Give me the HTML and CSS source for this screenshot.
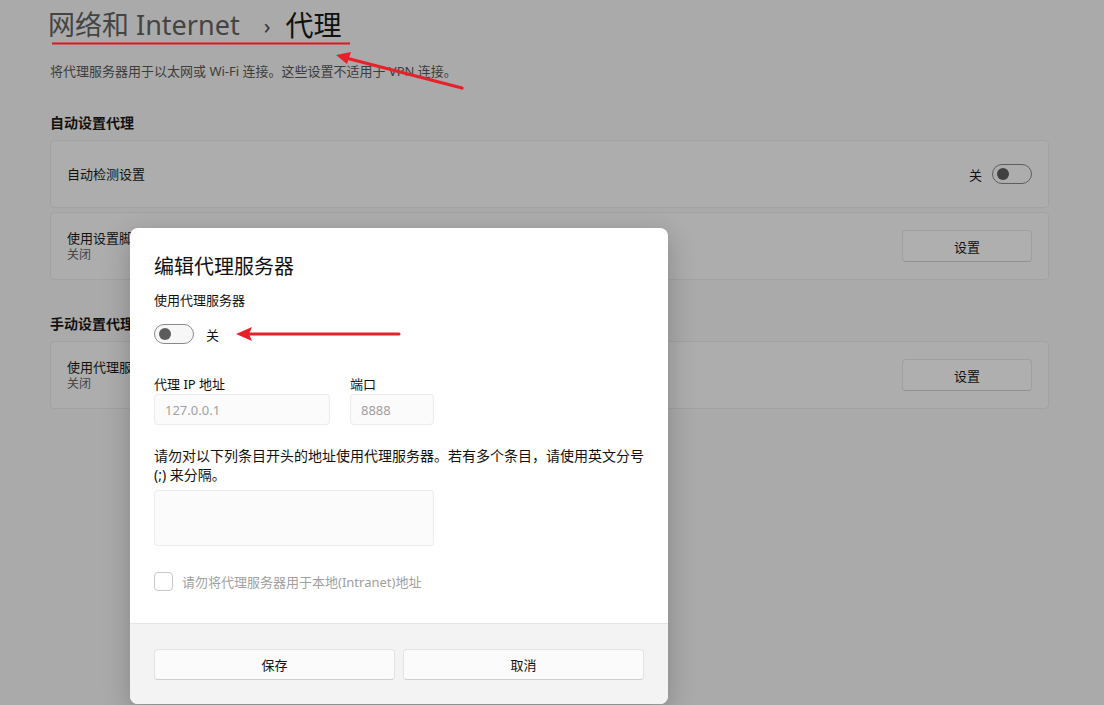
FILE: index.html
```html
<!DOCTYPE html>
<html lang="zh-CN">
<head>
    <meta charset="UTF-8">
    <meta name="viewport" content="width=device-width, initial-scale=1.0">
    <title>代理</title>
    <link rel="stylesheet" href="styles.css">
</head>
<body>
    <div class="page">
        <h1 class="pageTitle">
            <span class="crumb">网络和 Internet</span>
            <span class="chevron">&#8250;</span>
            <span class="current">代理</span>
        </h1>
        <p class="pageDesc">将代理服务器用于以太网或 Wi-Fi 连接。这些设置不适用于 VPN 连接。</p>

        <h2 class="sectionTitle">自动设置代理</h2>
        <div class="card">
            <div class="cardText">自动检测设置</div>
            <div class="cardRight">
                <span class="toggleLabel">关</span>
                <span class="toggle dim"><span class="knob"></span></span>
            </div>
        </div>
        <div class="card">
            <div class="cardText">使用设置脚本<div class="cardSub">关闭</div></div>
            <button class="btn dimBtn">设置</button>
        </div>

        <h2 class="sectionTitle second">手动设置代理</h2>
        <div class="card">
            <div class="cardText">使用代理服务器<div class="cardSub">关闭</div></div>
            <button class="btn dimBtn">设置</button>
        </div>
    </div>

    <div class="dialog">
        <div class="dialogBody">
            <h3 class="dialogTitle">编辑代理服务器</h3>
            <div class="fieldLabel">使用代理服务器</div>
            <div class="toggleRow">
                <span class="toggle"><span class="knob"></span></span>
                <span class="toggleLabel">关</span>
            </div>
            <div class="fieldRow">
                <div class="field">
                    <div class="fieldLabel">代理 IP 地址</div>
                    <div class="input ipInput">127.0.0.1</div>
                </div>
                <div class="field">
                    <div class="fieldLabel">端口</div>
                    <div class="input portInput">8888</div>
                </div>
            </div>
            <p class="note">请勿对以下列条目开头的地址使用代理服务器。若有多个条目，请使用英文分号 (;) 来分隔。</p>
            <div class="input area"></div>
            <label class="check">
                <span class="box"></span>
                <span>请勿将代理服务器用于本地(Intranet)地址</span>
            </label>
        </div>
        <div class="dialogFooter">
            <button class="btn wide">保存</button>
            <button class="btn wide">取消</button>
        </div>
    </div>

    <svg class="marks" width="1104" height="705" viewBox="0 0 1104 705">
        <line x1="52" y1="43.5" x2="350" y2="43.5" stroke="#e0161e" stroke-width="2.2"/>
        <line x1="462" y1="88" x2="346" y2="58" stroke="#e8202a" stroke-width="3.2" stroke-linecap="round"/>
        <polygon points="336,55 351,52 347,64" fill="#e8202a"/>
        <line x1="399" y1="334" x2="248" y2="334" stroke="#e8202a" stroke-width="3" stroke-linecap="round"/>
        <polygon points="236,334 252,327 249,334 252,341" fill="#e8202a"/>
    </svg>
</body>
</html>
```

FILE: styles.css
```css
*{
    margin: 0;
    padding: 0;
    box-sizing: border-box;
}
body{
    background: #aaaaaa;
    font-family: "Noto Sans", "Noto Sans CJK SC", sans-serif;
    color: #111;
    width: 1104px;
    height: 705px;
    overflow: hidden;
    position: relative;
}
.page{
    padding: 6px 55px 0 50px;
}
.pageTitle{
    font-size: 28px;
    font-weight: 400;
    line-height: 38px;
    display: flex;
    align-items: center;
}
.crumb{
    color: #444;
    font-size: 27px;
    margin-left: -2px;
}
.chevron{
    color: #333;
    font-size: 22px;
    margin: 0 15px 0 24px;
}
.current{
    color: #111;
}
.pageDesc{
    font-size: 13px;
    color: #3c3c3c;
    line-height: 18px;
    margin-top: 18px;
}
.sectionTitle{
    font-size: 14px;
    font-weight: 600;
    line-height: 20px;
    margin-top: 33px;
    margin-bottom: 7px;
}
.sectionTitle.second{
    margin-top: 34px;
}
/* cards */
.card{
    background: #adadad;
    border: 1px solid #a2a2a2;
    border-radius: 4px;
    height: 68px;
    margin-bottom: 4px;
    padding: 0 16px 0 16px;
    display: flex;
    align-items: center;
    justify-content: space-between;
}
.cardText{
    font-size: 13px;
    line-height: 18px;
}
.cardSub{
    font-size: 12px;
    color: #444;
    line-height: 16px;
}
.cardRight{
    display: flex;
    align-items: center;
    gap: 10px;
}
.toggleLabel{
    font-size: 13px;
}
.toggle{
    width: 40px;
    height: 20px;
    border: 1px solid #8a8a8a;
    border-radius: 10px;
    background: #f7f7f7;
    display: flex;
    align-items: center;
    padding-left: 4px;
}
.toggle.dim{
    background: #adadad;
    border-color: #5e5e5e;
}
.knob{
    width: 12px;
    height: 12px;
    border-radius: 50%;
    background: #5c5c5c;
}
.toggle.dim .knob{
    background: #404040;
}
.btn{
    font-family: inherit;
    font-size: 13px;
    color: #111;
    background: #fbfbfb;
    border: 1px solid #e3e3e3;
    border-bottom-color: #cfcfcf;
    border-radius: 4px;
    height: 32px;
}
.dimBtn{
    width: 130px;
    background: #afafaf;
    border-color: #9f9f9f;
    border-bottom-color: #919191;
}
/* dialog */
.dialog{
    position: absolute;
    left: 130px;
    top: 228px;
    width: 538px;
    height: 476px;
    background: #fff;
    border-radius: 8px;
    overflow: hidden;
    box-shadow: 0 8px 28px rgba(0, 0, 0, 0.22);
    display: flex;
    flex-direction: column;
}
.dialogBody{
    flex: 1;
    padding: 24px 24px 0 24px;
}
.dialogTitle{
    font-size: 20px;
    font-weight: 400;
    line-height: 30px;
}
.fieldLabel{
    font-size: 13px;
    line-height: 18px;
    margin-top: 9px;
}
.toggleRow{
    display: flex;
    align-items: center;
    gap: 12px;
    margin-top: 15px;
}
.fieldRow{
    display: flex;
    gap: 20px;
    margin-top: 31px;
}
.field .fieldLabel{
    margin-top: 0;
    margin-bottom: 1px;
}
.input{
    height: 31px;
    background: #fbfbfb;
    border: 1px solid #ececec;
    border-radius: 4px;
    font-size: 13px;
    color: #a0a0a0;
    padding: 6px 10px;
    line-height: 18px;
}
.ipInput{
    width: 176px;
}
.portInput{
    width: 84px;
}
.note{
    font-size: 14px;
    line-height: 19px;
    margin-top: 21px;
}
.area{
    width: 280px;
    height: 56px;
    margin-top: 6px;
}
.check{
    display: flex;
    align-items: center;
    gap: 9px;
    font-size: 13px;
    color: #a0a0a0;
    margin-top: 26px;
}
.box{
    width: 19px;
    height: 19px;
    border: 1px solid #c8c8c8;
    border-radius: 4px;
}
.dialogFooter{
    height: 81px;
    background: #f3f3f3;
    border-top: 1px solid #e5e5e5;
    display: flex;
    gap: 8px;
    padding: 25px 24px 0 24px;
}
.wide{
    flex: 1;
    height: 31px;
}
.marks{
    position: absolute;
    left: 0;
    top: 0;
}
```
